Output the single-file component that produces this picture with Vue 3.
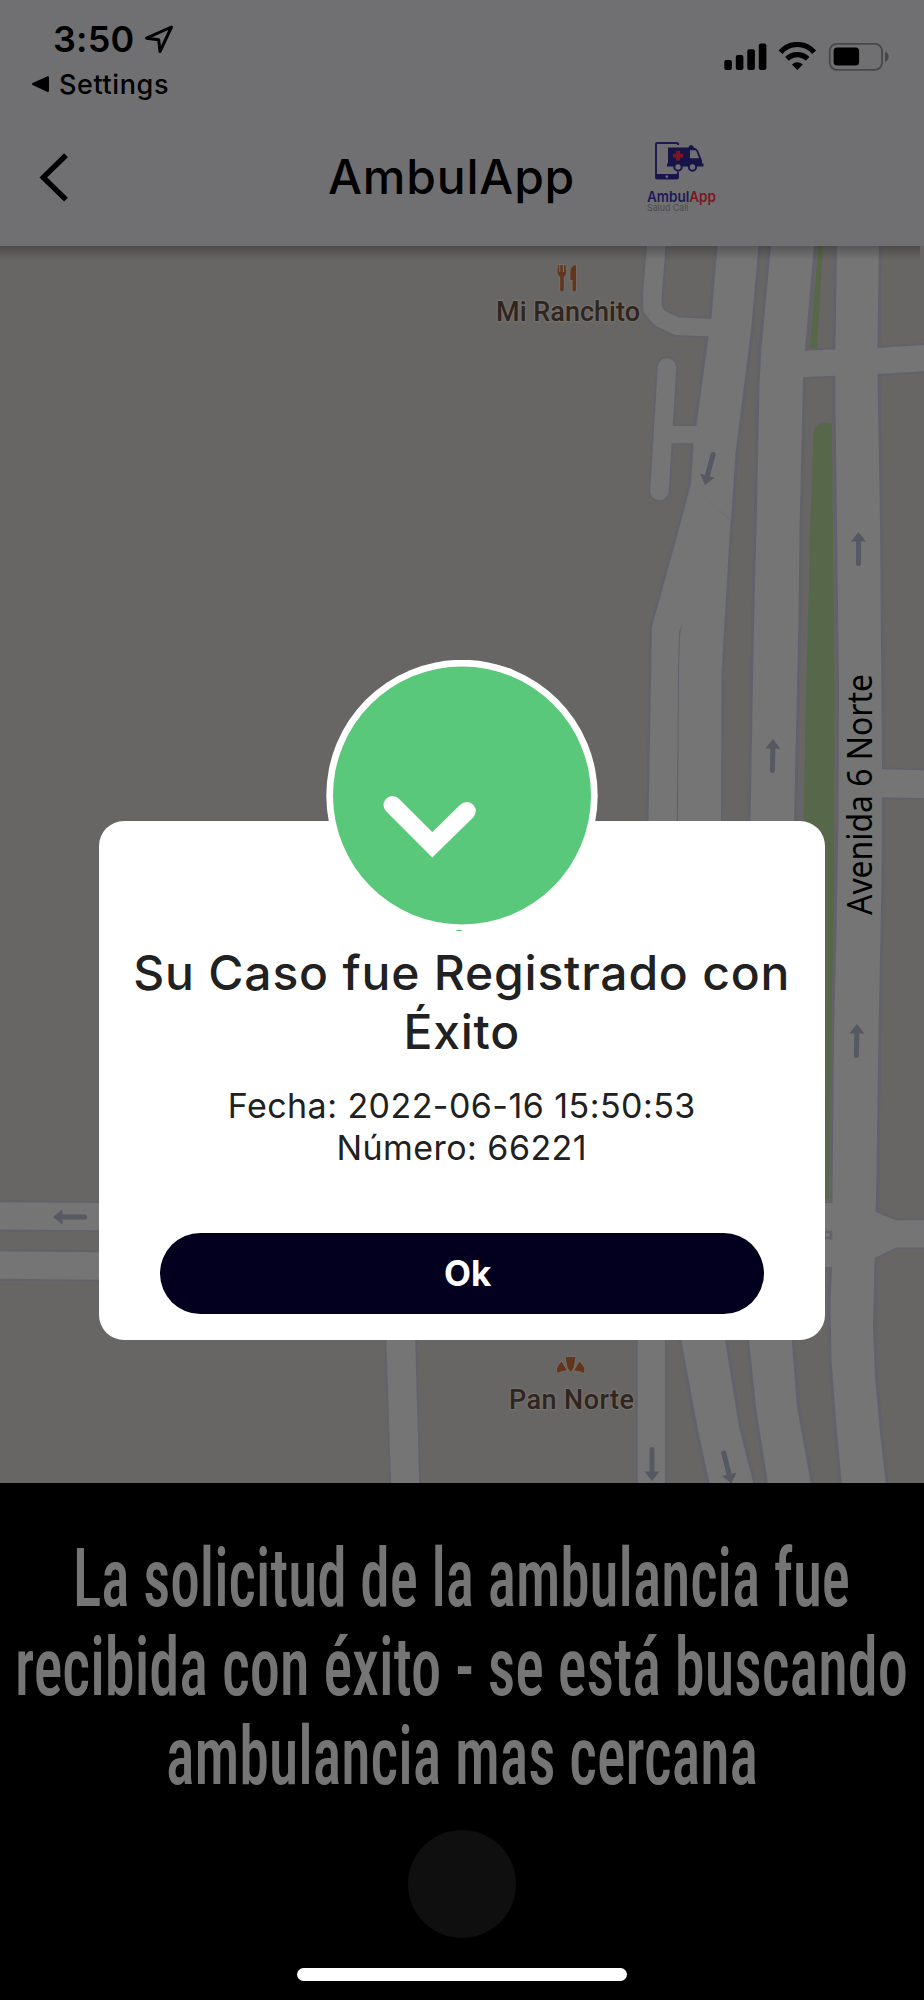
<template>
    <div class="screen">
        <header class="header">
            <div class="status-bar">
                <div class="status-left">
                    <div class="clock">
                        <span class="time">3:50</span>
                        <svg class="location" viewBox="144 24 30 30">
                            <path d="M171.5 27 L146.5 38.2 L158.7 39.8 L160 51.5 Z" />
                        </svg>
                    </div>
                    <div class="back-app">
                        <svg class="back-triangle" viewBox="31 74 19 20">
                            <path d="M33 84 L48 77.2 V91 Z" />
                        </svg>
                        <span>Settings</span>
                    </div>
                </div>
                <svg class="status-icons" viewBox="724 42 166 30">
                    <rect x="724.3" y="60" width="7.6" height="10" rx="2" />
                    <rect x="735.8" y="55" width="7.6" height="15" rx="2" />
                    <rect x="747.3" y="49.3" width="7.6" height="20.7" rx="2" />
                    <rect x="758.8" y="43.5" width="7.6" height="26.5" rx="2" />
                    <g class="wifi">
                        <path d="M780.5 52.3 A22 22 0 0 1 814.1 52.3" />
                        <path d="M787 58.9 A14.5 14.5 0 0 1 807.6 58.9" />
                    </g>
                    <path d="M791.8 64.6 Q797.3 60 802.8 64.6 L797.3 70 Z" />
                    <rect class="battery" x="829.8" y="43.8" width="52.2" height="26" rx="7" />
                    <rect x="833.6" y="47.6" width="25.5" height="18" rx="3.5" />
                    <path class="battery-tip" d="M885 51.5 Q888.7 53 888.7 56.6 Q888.7 60.5 885 62 Z" />
                </svg>
            </div>
            <div class="nav-bar">
                <svg class="nav-back" viewBox="38 152 32 51">
                    <path d="M66 155.2 L43.3 177.4 L66 199.6" />
                </svg>
                <h1>AmbulApp</h1>
                <svg class="logo" viewBox="644 138 76 76">
                    <path class="phone" d="M678 144 V142.5 Q678 142 677 142 H657 Q656 142 656 143 V176.5 Q656 177.5 657 177.5 H677 Q678 177.5 678 176.5 V171" />
                    <rect class="navy" x="656" y="173" width="22" height="5" />
                    <circle class="hole" cx="666.8" cy="175.6" r="1.3" />
                    <path class="navy" d="M668 146.5 H688.5 Q688.8 144 691.2 144 Q693.5 144 693.8 146.5 Q697 147 698.2 150 L702 159.5 V162.5 H703.5 V165.5 H667 V162.5 H668 Z" />
                    <path class="hole" d="M690 149.3 H695 Q696.2 149.5 696.8 151 L699 157.3 H690 Z" />
                    <path class="cross" d="M676 149.8 h4 v2.9 h3 v4 h-3 v2.9 h-4 v-2.9 h-3 v-4 h3 Z" />
                    <circle class="wheel" cx="678" cy="166" r="3.7" />
                    <circle class="wheel" cx="692.5" cy="166" r="3.7" />
                    <text class="logo-name" x="647" y="200.5" textLength="69" lengthAdjust="spacingAndGlyphs">
                        <tspan class="blue">Ambul</tspan><tspan class="red">App</tspan>
                    </text>
                    <text class="logo-sub" x="647" y="210" textLength="41.5" lengthAdjust="spacingAndGlyphs">Salud Cali</text>
                </svg>
            </div>
        </header>

        <main class="map-wrapper">
            <svg class="map" viewBox="0 246 924 1237">
                <rect class="land" x="0" y="246" width="924" height="1237" />
                <path class="park" d="M818.5 246 H823 L817 348 H809.5 Z" />
                <path class="park" d="M813.5 432 Q815 424 825 422.7 H830 Q832 423 832 427 L833 540 L834.5 690 L834 900 L829 1199.5 H795 L803.5 820 L806.5 677 L810.5 520 Z" />

                <!-- casing first, road surface after, so crossings merge -->
                <g class="casing">
                    <path v-for="(road, i) in roads" :key="'c' + i" :d="road.d" :stroke-width="road.casing" />
                    <path class="casing-line" d="M667 367.5 L659.5 491" />
                </g>
                <g class="surface">
                    <path v-for="(road, i) in roads" :key="'s' + i" :d="road.d" />
                    <path class="surface-line" d="M667 367.5 L659.5 491" />
                </g>
                <rect class="island" x="815" y="1232" width="16" height="6" />
                <path class="divider" d="M682.3 622 L680.2 634 L679 670 L678 821 L676.7 821 L678 670 L679.2 632 Z" />

                <path
                    v-for="(arrow, i) in arrows"
                    :key="'a' + i"
                    class="arrow"
                    :transform="`translate(${arrow.x} ${arrow.y}) rotate(${arrow.angle})`"
                    d="M0 -17 L7.5 -7.5 H2.5 V14.5 A2.5 2.5 0 0 1 -2.5 14.5 V-7.5 H-7.5 Z"
                />

                <g class="poi-icon">
                    <path d="M557.8 265 H559.2 V272 H560.3 V265 H562.8 V272 H564 V265 H565.5 L566.2 272.5 Q566.2 275 563.8 277 V290.5 Q562 292.5 560.2 290.5 V277 Q557.5 275 557.5 272.5 Z" />
                    <path d="M576 265 V290.5 Q574.3 292.5 572.6 290.5 V280 H570.3 V271 Q571 265.5 576 265 Z" />
                    <path d="M565.5 1357 H575.5 L573.5 1368 L570.8 1372 L567.6 1368 Z" />
                    <path d="M561.5 1361.5 L567 1370.5 Q561 1370.5 557.8 1373 Q556 1370 558 1366 Z" />
                    <path d="M579.5 1361.5 L574.2 1370.5 Q580 1370.5 583.5 1373 Q585.5 1370 583.3 1366 Z" />
                </g>
                <text class="poi" x="496" y="321" textLength="144" lengthAdjust="spacing">Mi Ranchito</text>
                <text class="poi" x="509" y="1408.5" textLength="125" lengthAdjust="spacing">Pan Norte</text>
                <text class="street" transform="translate(872 915) rotate(-90)" textLength="241" lengthAdjust="spacingAndGlyphs">Avenida 6 Norte</text>
            </svg>
            <div class="map-shade"></div>
        </main>

        <footer class="request-state">
            <svg class="caption" viewBox="0 1483 924 347">
                <text
                    v-for="line in captionLines"
                    :key="line.text"
                    :transform="`translate(${line.x} ${line.y}) scale(${captionScale} 1)`"
                    :textLength="line.width / captionScale"
                    lengthAdjust="spacingAndGlyphs"
                >{{ line.text }}</text>
            </svg>
            <div class="round-button"></div>
            <div class="home-indicator"></div>
        </footer>

        <div class="modal">
            <div class="modal-icon">
                <svg viewBox="326 660 272 276">
                    <circle cx="462" cy="795.5" r="135.7" fill="#fff" />
                    <circle cx="462" cy="795.5" r="129" fill="#5ac87a" />
                    <path class="check" d="M392.5 805 L432.3 844.8 L466.8 811" />
                    <ellipse cx="459" cy="930.5" rx="3.2" ry="0.8" fill="#5ac87a" />
                </svg>
            </div>
            <h2>Su Caso fue Registrado con Éxito</h2>
            <p>Fecha: {{ request.date }}</p>
            <p>Número: {{ request.number }}</p>
            <button type="button">Ok</button>
        </div>
    </div>
</template>

<script setup>
const request = {
    date: '2022-06-16 15:50:53',
    number: 66221,
};

// horizontal squeeze of the tall caption lettering
const captionScale = 0.68;

const captionLines = [
    { text: 'La solicitud de la ambulancia fue', x: 73, y: 1606, width: 777 },
    { text: 'recibida con éxito - se está buscando', x: 15, y: 1695, width: 893 },
    { text: 'ambulancia mas cercana', x: 166, y: 1783.5, width: 592 },
];

const roads = [
    // side streets, top
    { casing: 4, d: 'M647.5 240 L643 293 L643.5 311 Q648 319 656 326 L675 335 L712 336.5 V319 L679 317.5 L666 311.5 Q661.5 308 661.5 303 L662 293 L666 240 Z' },
    { casing: 4, d: 'M672 426 H700 V443.3 H671 Z' },
    // main lanes
    { casing: 6, d: 'M718 240 L711.5 318 L708.5 337 L696.5 425 L693.5 445 L691 485 L731 520 L735.5 453 L751 330 L759 240 Z' },
    { casing: 5, d: 'M691 484 L676 540 L652 627 L648.5 821 H721 L721.5 673 L730.5 520 Z' },
    { casing: 6, d: 'M771.5 240 L761.3 350 L759.5 385 L756.7 520 L754 623 L750.5 821 H794 L798.5 620 L799.5 530 L803 378 L805 349 L814.5 240 Z' },
    { casing: 6, d: 'M837 240 L835.5 350 L835.5 407 L837 520 L839 687 L838.5 820 L836.5 933 L834 1033 L832.5 1200 L832 1268 L830.5 1303 L831.5 1360 L837 1433 L842.5 1490 H886.5 L880 1433 L875 1377 L873 1327 L874.5 1259 L875.5 1210 L876 1200 L878.5 1033 L881.5 883 L882 767 L880 520 L877.5 375 L877.5 347 L879 240 Z' },
    // crossings
    { casing: 4, d: 'M795 351 L877 348 L930 344.5 V371 L877 374 L795 377.5 Z' },
    { casing: 4, d: 'M875 769 L930 770.5 V798.5 L875 797 Z' },
    { casing: 4, d: 'M870 1209 L876 1212 L896 1220.3 H930 V1247.5 H896 L875 1258 L870 1261 Z' },
    { casing: 2, d: 'M800 1203 H840 V1267 H800 Z' },
    { casing: 4, d: 'M-5 1202.3 L120 1203.3 V1230.5 L-5 1229.5 Z' },
    { casing: 4, d: 'M-5 1251.3 L120 1252.5 V1280 L-5 1278.7 Z' },
    // lower part
    { casing: 4, d: 'M386 1330 H415 L419.3 1490 H391.3 Z' },
    { casing: 4, d: 'M637.7 1330 H665 V1490 H637.7 Z' },
    { casing: 6, d: 'M679.5 1330 L698 1430 L711 1490 H755 L739 1427 L723.5 1330 Z' },
    { casing: 6, d: 'M748 1330 L756 1407 L769 1490 H812 L797 1407 L791 1330 Z' },
];

const arrows = [
    { x: 709.3, y: 468.5, angle: 195 },
    { x: 858.5, y: 549, angle: 0 },
    { x: 772.7, y: 756, angle: 1 },
    { x: 856.7, y: 1041, angle: 1 },
    { x: 70, y: 1217, angle: -90 },
    { x: 652, y: 1464, angle: 180 },
    { x: 727.3, y: 1467, angle: 166 },
];
</script>

<style>
body {
    margin: 0;
    background: #000;
}
</style>

<style scoped>
.screen {
    position: relative;
    display: flex;
    flex-direction: column;
    width: 924px;
    height: 2000px;
    font-family: Inter, 'Liberation Sans', sans-serif;
}

svg {
    display: block;
}

.header {
    box-sizing: border-box;
    height: 246px;
    background: #707072;
    color: #000;
}

.status-bar {
    display: flex;
    justify-content: space-between;
    height: 108px;
    padding: 18px 34px 0 31px;
    box-sizing: border-box;
}

.clock {
    display: flex;
    align-items: center;
    gap: 10px;
    height: 42px;
    padding-left: 22px;
}

.time {
    width: 81px;
    font-size: 36px;
    font-weight: 600;
    letter-spacing: 0.2px;
    white-space: nowrap;
}

.location {
    width: 30px;
    height: 30px;
    fill: none;
    stroke: #000;
    stroke-width: 3;
    stroke-linejoin: round;
}

.back-app {
    display: flex;
    align-items: center;
    gap: 9px;
    height: 48px;
    font-size: 27px;
    font-weight: 500;
    letter-spacing: 0.6px;
}

.back-triangle {
    width: 19px;
    height: 20px;
    stroke: #000;
    stroke-width: 2;
    stroke-linejoin: round;
}

.status-icons {
    width: 166px;
    height: 30px;
    margin-top: 24px;
}

.wifi {
    fill: none;
    stroke: #000;
    stroke-width: 5.2;
}

.battery {
    fill: none;
    stroke: #48484a;
    stroke-width: 1.8;
}

.battery-tip {
    fill: #48484a;
}

.nav-bar {
    display: flex;
    align-items: center;
    height: 138px;
    padding-left: 38px;
}

.nav-back {
    width: 32px;
    height: 51px;
    fill: none;
    stroke: #000;
    stroke-width: 5.4;
}

.nav-bar h1 {
    width: 252px;
    margin: 0 0 0 258px;
    font-size: 48px;
    font-weight: 500;
    line-height: 60px;
    letter-spacing: 0.8px;
    white-space: nowrap;
}

.logo {
    width: 76px;
    height: 76px;
    margin-left: 64px;
}

.phone {
    fill: none;
    stroke: #1d1a4e;
    stroke-width: 2;
}

.navy {
    fill: #17144a;
}

.hole {
    fill: #707072;
}

.cross {
    fill: #7c1620;
}

.wheel {
    fill: #707072;
    stroke: #17144a;
    stroke-width: 2;
}

.logo-name {
    font: 600 15px Inter, sans-serif;
}

.blue {
    fill: #1c1a58;
}

.red {
    fill: #7c1620;
}

.logo-sub {
    font: 400 9.5px Inter, sans-serif;
    fill: #4c4c50;
}

.map-wrapper {
    position: relative;
    height: 1237px;
}

.map {
    width: 924px;
    height: 1237px;
}

.map-shade {
    position: absolute;
    top: 0;
    left: 0;
    width: 920px;
    height: 14px;
    background: linear-gradient(rgba(0, 0, 0, 0.26), rgba(0, 0, 0, 0));
}

.land {
    fill: #686664;
}

.park {
    fill: #566849;
}

.casing {
    fill: #62626a;
    stroke: #62626a;
}

.casing-line {
    stroke-width: 22;
    stroke-linecap: round;
}

.surface {
    fill: #757575;
}

.surface-line {
    stroke: #757575;
    stroke-width: 18.5;
    stroke-linecap: round;
}

.island {
    fill: #757575;
    stroke: #62626a;
    stroke-width: 2.5;
}

.divider {
    fill: #62626a;
}

.arrow {
    fill: #565862;
}

.poi-icon {
    fill: #63351c;
    stroke: #74706c;
    stroke-width: 1.5;
    paint-order: stroke;
}

.poi {
    font: 500 27px Roboto, sans-serif;
    fill: #30261f;
    stroke: #74706c;
    stroke-width: 2.5;
    paint-order: stroke;
}

.street {
    font: 400 35px 'Noto Sans', sans-serif;
    fill: #000;
}

.request-state {
    display: flex;
    flex-direction: column;
    align-items: center;
    height: 517px;
    background: #000;
}

.caption {
    width: 924px;
    height: 347px;
    font-family: Roboto, sans-serif;
    font-size: 82px;
    font-weight: 500;
    font-stretch: 75%;
    fill: #757575;
}

.round-button {
    width: 108px;
    height: 108px;
    border-radius: 50%;
    background: #0f0f0f;
}

.home-indicator {
    width: 330px;
    height: 12.5px;
    margin-top: 30px;
    border-radius: 7px;
    background: #fff;
}

.modal {
    position: absolute;
    top: 820.5px;
    left: 98.5px;
    display: flex;
    flex-direction: column;
    align-items: center;
    box-sizing: border-box;
    width: 726.5px;
    height: 519.5px;
    border-radius: 25px;
    background: #fff;
    color: #212121;
    text-align: center;
}

.modal-icon {
    width: 272px;
    height: 276px;
    margin-top: -160.5px;
}

.check {
    fill: none;
    stroke: #fff;
    stroke-width: 18;
    stroke-linecap: round;
    stroke-linejoin: miter;
}

.modal h2 {
    width: 690px;
    margin: 7px 0 24px;
    font-size: 48px;
    font-weight: 500;
    line-height: 59px;
    letter-spacing: 0.8px;
}

.modal p {
    margin: 0;
    font-size: 34px;
    line-height: 42px;
    letter-spacing: 0.45px;
}

.modal button {
    width: 604px;
    height: 81px;
    margin-top: 64px;
    padding: 0 0 2px 12px;
    border: none;
    border-radius: 41px;
    background: #03001f;
    color: #fff;
    font: 700 35px Inter, sans-serif;
}
</style>
